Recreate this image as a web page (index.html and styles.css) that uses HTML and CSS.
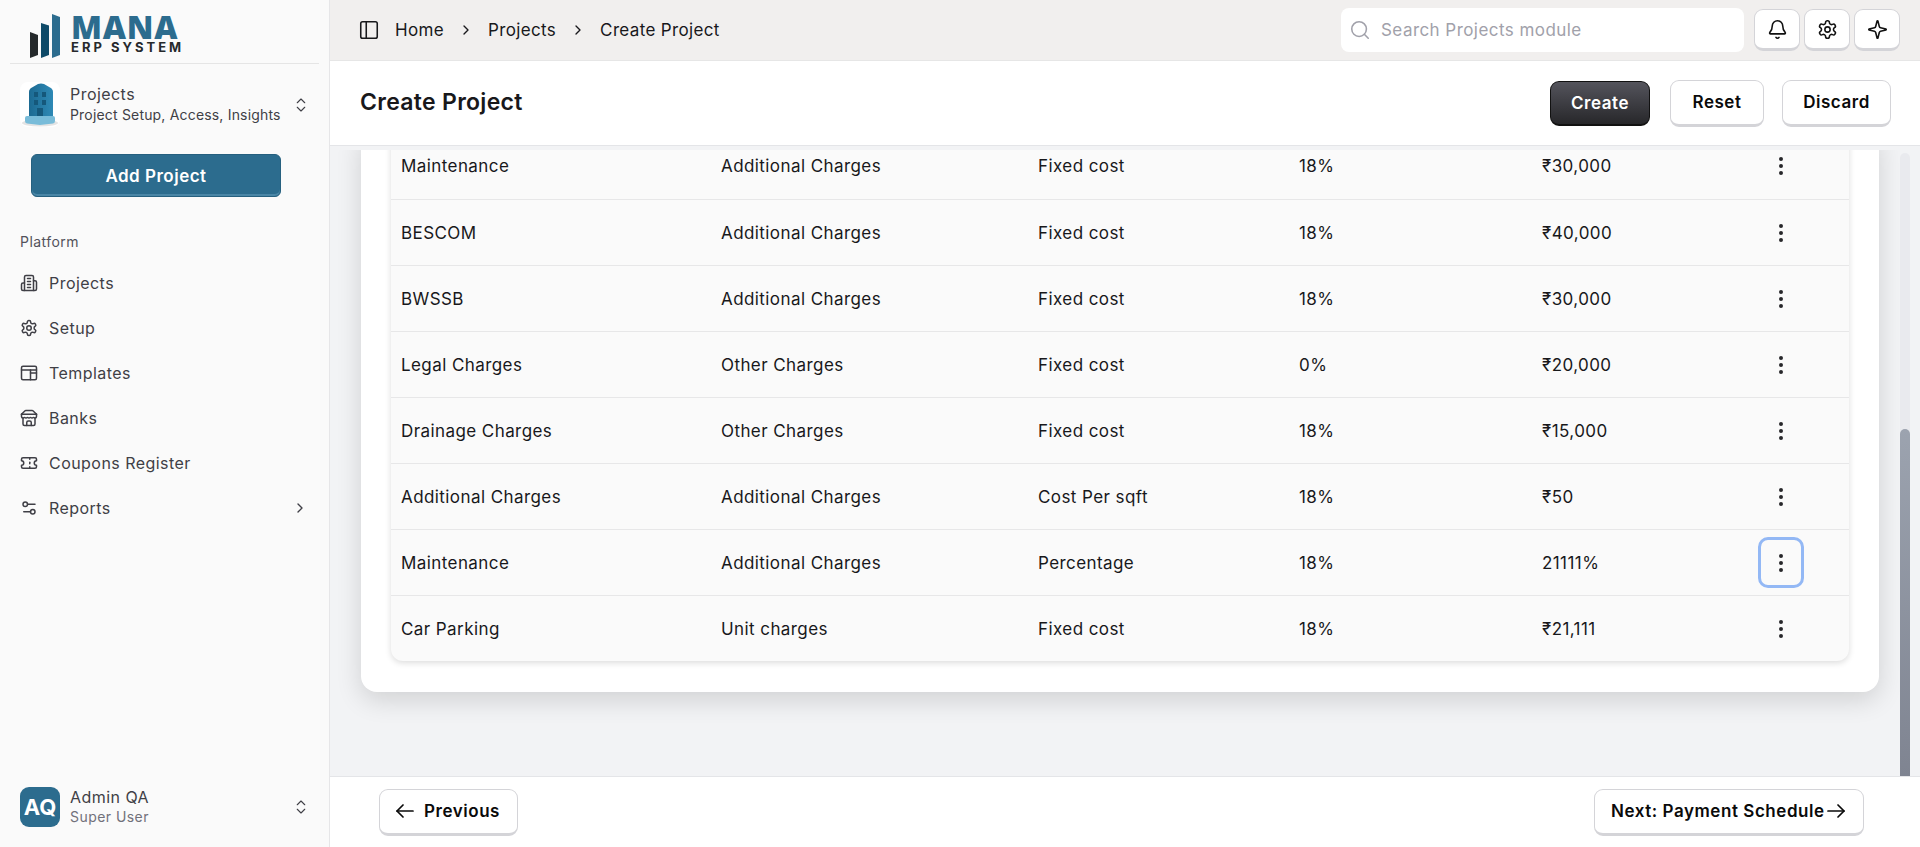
FILE: index.html
```html
<!DOCTYPE html>
<html lang="en">
<head>
    <meta charset="UTF-8">
    <meta name="viewport" content="width=device-width, initial-scale=1.0">
    <title>Create Project</title>
    <link rel="stylesheet" href="styles.css">
</head>
<body>

    <aside class="sidebar">
        <div class="brand">
            <svg class="brand-bars" width="32" height="46" viewBox="0 0 32 46">
                <polygon points="0,18 8,21 8,41 0,44" fill="#25292b"/>
                <polygon points="11,9 19,11.5 19,41 11,44" fill="#0e4a68"/>
                <polygon points="22,0 30,3 30,41 22,44" fill="#2c6c8e"/>
            </svg>
            <div class="brand-text">
                <div class="brand-name">MANA</div>
                <div class="brand-sub">ERP SYSTEM</div>
            </div>
        </div>

        <div class="module">
            <svg class="module-pic" width="40" height="45" viewBox="0 0 40 45">
                <defs>
                    <linearGradient id="towerFill" x1="0" y1="0" x2="1" y2="0">
                        <stop offset="0" stop-color="#1c6a92"/>
                        <stop offset="1" stop-color="#2f8ab6"/>
                    </linearGradient>
                </defs>
                <rect x="0" y="0" width="40" height="45" rx="8" fill="#ffffff"/>
                <ellipse cx="20" cy="41" rx="18" ry="3.500" fill="#e4e4e4"/>
                <path d="M9 35V10q0-3 3-4.500L18 2q3-1 6 0l6 3.500q3 1.500 3 4.500V35Z" fill="url(#towerFill)"/>
                <path d="M5 36q0-2 2-2h26q2 0 2 2v3q0 2-2 2.500L20 43 7 41.500q-2-.5-2-2.500Z" fill="#79bcd9"/>
                <g fill="#15587b">
                    <rect x="14" y="10" width="4" height="5"/>
                    <rect x="22" y="10" width="4" height="5"/>
                    <rect x="14" y="18" width="4" height="5"/>
                    <rect x="22" y="18" width="4" height="5"/>
                    <rect x="17" y="26" width="6" height="8"/>
                </g>
            </svg>
            <div class="module-text">
                <div class="module-title">Projects</div>
                <div class="module-sub">Project Setup, Access, Insights</div>
            </div>
            <svg class="icon-sm chevrons" viewBox="0 0 24 24"><path d="m7 15 5 5 5-5"/><path d="m7 9 5-5 5 5"/></svg>
        </div>

        <button class="add-btn">Add Project</button>

        <div class="nav-label">Platform</div>
        <nav class="nav">
            <a class="nav-item">
                <svg class="icon" viewBox="0 0 24 24"><path d="M6 22V4a2 2 0 0 1 2-2h8a2 2 0 0 1 2 2v18Z"/><path d="M6 12H4a2 2 0 0 0-2 2v6a2 2 0 0 0 2 2h2"/><path d="M18 9h2a2 2 0 0 1 2 2v9a2 2 0 0 1-2 2h-2"/><path d="M10 6h4"/><path d="M10 10h4"/><path d="M10 14h4"/><path d="M10 18h4"/></svg>
                Projects
            </a>
            <a class="nav-item">
                <svg class="icon" viewBox="0 0 24 24"><path d="M12.220 2h-.44a2 2 0 0 0-2 2v.18a2 2 0 0 1-1 1.730l-.43.25a2 2 0 0 1-2 0l-.15-.08a2 2 0 0 0-2.730.73l-.22.38a2 2 0 0 0 .73 2.730l.15.1a2 2 0 0 1 1 1.720v.51a2 2 0 0 1-1 1.740l-.15.09a2 2 0 0 0-.73 2.730l.22.38a2 2 0 0 0 2.730.73l.15-.08a2 2 0 0 1 2 0l.43.25a2 2 0 0 1 1 1.730V20a2 2 0 0 0 2 2h.44a2 2 0 0 0 2-2v-.18a2 2 0 0 1 1-1.730l.43-.25a2 2 0 0 1 2 0l.15.08a2 2 0 0 0 2.730-.73l.22-.39a2 2 0 0 0-.73-2.730l-.15-.08a2 2 0 0 1-1-1.740v-.5a2 2 0 0 1 1-1.740l.15-.09a2 2 0 0 0 .73-2.730l-.22-.38a2 2 0 0 0-2.730-.73l-.15.08a2 2 0 0 1-2 0l-.43-.25a2 2 0 0 1-1-1.730V4a2 2 0 0 0-2-2z"/><circle cx="12" cy="12" r="3"/></svg>
                Setup
            </a>
            <a class="nav-item">
                <svg class="icon" viewBox="0 0 24 24"><rect x="2" y="3" width="20" height="18" rx="2"/><path d="M2 8h20"/><path d="M14 8v13"/><path d="M14 12h8"/></svg>
                Templates
            </a>
            <a class="nav-item">
                <svg class="icon" viewBox="0 0 24 24"><path d="m2 7 4.410-4.410A2 2 0 0 1 7.830 2h8.340a2 2 0 0 1 1.420.59L22 7"/><path d="M4 12v8a2 2 0 0 0 2 2h12a2 2 0 0 0 2-2v-8"/><path d="M15 22v-4a2 2 0 0 0-2-2h-2a2 2 0 0 0-2 2v4"/><path d="M2 7h20"/><path d="M22 7v3a2 2 0 0 1-2 2 2.700 2.700 0 0 1-1.590-.63.7.7 0 0 0-.82 0A2.700 2.700 0 0 1 16 12a2.700 2.700 0 0 1-1.590-.63.7.7 0 0 0-.82 0A2.700 2.700 0 0 1 12 12a2.700 2.700 0 0 1-1.590-.63.7.7 0 0 0-.82 0A2.700 2.700 0 0 1 8 12a2.700 2.700 0 0 1-1.590-.63.7.7 0 0 0-.82 0A2.700 2.700 0 0 1 4 12a2 2 0 0 1-2-2V7"/></svg>
                Banks
            </a>
            <a class="nav-item">
                <svg class="icon" viewBox="0 0 24 24"><path d="M2 9a3 3 0 0 1 0 6v2a2 2 0 0 0 2 2h16a2 2 0 0 0 2-2v-2a3 3 0 0 1 0-6V7a2 2 0 0 0-2-2H4a2 2 0 0 0-2 2Z"/><path d="M13 5v2"/><path d="M13 17v2"/><path d="M13 11v2"/></svg>
                Coupons Register
            </a>
            <a class="nav-item">
                <svg class="icon" viewBox="0 0 24 24"><path d="M20 7h-9"/><path d="M14 17H5"/><circle cx="17" cy="17" r="3"/><circle cx="7" cy="7" r="3"/></svg>
                Reports
                <svg class="icon-sm nav-arrow" viewBox="0 0 24 24"><path d="m9 18 6-6-6-6"/></svg>
            </a>
        </nav>

        <div class="user">
            <div class="avatar">AQ</div>
            <div class="user-text">
                <div class="user-name">Admin QA</div>
                <div class="user-role">Super User</div>
            </div>
            <svg class="icon-sm chevrons" viewBox="0 0 24 24"><path d="m7 15 5 5 5-5"/><path d="m7 9 5-5 5 5"/></svg>
        </div>
    </aside>

    <div class="main">
        <header class="topbar">
            <svg class="icon panel-icon" viewBox="0 0 24 24"><rect x="3" y="3" width="18" height="18" rx="2"/><path d="M9 3v18"/></svg>
            <div class="crumbs">
                <span>Home</span>
                <svg class="icon-sm" viewBox="0 0 24 24"><path d="m9 18 6-6-6-6"/></svg>
                <span>Projects</span>
                <svg class="icon-sm" viewBox="0 0 24 24"><path d="m9 18 6-6-6-6"/></svg>
                <span>Create Project</span>
            </div>
            <div class="search">
                <svg class="icon search-icon" viewBox="0 0 24 24"><circle cx="11" cy="11" r="8"/><path d="m21 21-4.300-4.300"/></svg>
                <span>Search Projects module</span>
            </div>
            <div class="top-actions">
                <button class="icon-btn"><svg class="icon" viewBox="0 0 24 24"><path d="M10.268 21a2 2 0 0 0 3.464 0"/><path d="M3.262 15.326A1 1 0 0 0 4 17h16a1 1 0 0 0 .74-1.673C19.410 13.956 18 12.499 18 8A6 6 0 0 0 6 8c0 4.499-1.411 5.956-2.738 7.326"/></svg></button>
                <button class="icon-btn"><svg class="icon" viewBox="0 0 24 24"><path d="M12.220 2h-.44a2 2 0 0 0-2 2v.18a2 2 0 0 1-1 1.730l-.43.25a2 2 0 0 1-2 0l-.15-.08a2 2 0 0 0-2.730.73l-.22.38a2 2 0 0 0 .73 2.730l.15.1a2 2 0 0 1 1 1.720v.51a2 2 0 0 1-1 1.740l-.15.09a2 2 0 0 0-.73 2.730l.22.38a2 2 0 0 0 2.730.73l.15-.08a2 2 0 0 1 2 0l.43.25a2 2 0 0 1 1 1.730V20a2 2 0 0 0 2 2h.44a2 2 0 0 0 2-2v-.18a2 2 0 0 1 1-1.730l.43-.25a2 2 0 0 1 2 0l.15.08a2 2 0 0 0 2.730-.73l.22-.39a2 2 0 0 0-.73-2.730l-.15-.08a2 2 0 0 1-1-1.740v-.5a2 2 0 0 1 1-1.740l.15-.09a2 2 0 0 0 .73-2.730l-.22-.38a2 2 0 0 0-2.730-.73l-.15.08a2 2 0 0 1-2 0l-.43-.25a2 2 0 0 1-1-1.730V4a2 2 0 0 0-2-2z"/><circle cx="12" cy="12" r="3"/></svg></button>
                <button class="icon-btn"><svg class="icon" viewBox="0 0 24 24"><path d="M9.937 15.500A2 2 0 0 0 8.500 14.063l-6.135-1.582a.5.5 0 0 1 0-.962L8.500 9.936A2 2 0 0 0 9.937 8.500l1.582-6.135a.5.5 0 0 1 .963 0L14.063 8.500A2 2 0 0 0 15.500 9.937l6.135 1.581a.5.5 0 0 1 0 .964L15.500 14.063a2 2 0 0 0-1.437 1.437l-1.582 6.135a.5.5 0 0 1-.963 0z"/></svg></button>
            </div>
        </header>

        <div class="page-head">
            <h1>Create Project</h1>
            <div class="page-actions">
                <button class="btn btn-dark">Create</button>
                <button class="btn btn-reset">Reset</button>
                <button class="btn btn-discard">Discard</button>
            </div>
        </div>

        <div class="content">
            <div class="scroll-pane">
                <div class="card">
                    <div class="table-wrap">
                        <table>
                            <colgroup>
                                <col class="col-name">
                                <col class="col-type">
                                <col class="col-basis">
                                <col class="col-tax">
                                <col class="col-amount">
                                <col>
                            </colgroup>
                            <tbody>
                                <tr><td>Maintenance</td><td>Additional Charges</td><td>Fixed cost</td><td>18%</td><td>₹30,000</td><td><button class="row-btn"><svg class="icon-dots" viewBox="0 0 24 24"><circle cx="12" cy="12" r="1"/><circle cx="12" cy="5" r="1"/><circle cx="12" cy="19" r="1"/></svg></button></td></tr>
                                <tr><td>BESCOM</td><td>Additional Charges</td><td>Fixed cost</td><td>18%</td><td>₹40,000</td><td><button class="row-btn"><svg class="icon-dots" viewBox="0 0 24 24"><circle cx="12" cy="12" r="1"/><circle cx="12" cy="5" r="1"/><circle cx="12" cy="19" r="1"/></svg></button></td></tr>
                                <tr><td>BWSSB</td><td>Additional Charges</td><td>Fixed cost</td><td>18%</td><td>₹30,000</td><td><button class="row-btn"><svg class="icon-dots" viewBox="0 0 24 24"><circle cx="12" cy="12" r="1"/><circle cx="12" cy="5" r="1"/><circle cx="12" cy="19" r="1"/></svg></button></td></tr>
                                <tr><td>Legal Charges</td><td>Other Charges</td><td>Fixed cost</td><td>0%</td><td>₹20,000</td><td><button class="row-btn"><svg class="icon-dots" viewBox="0 0 24 24"><circle cx="12" cy="12" r="1"/><circle cx="12" cy="5" r="1"/><circle cx="12" cy="19" r="1"/></svg></button></td></tr>
                                <tr><td>Drainage Charges</td><td>Other Charges</td><td>Fixed cost</td><td>18%</td><td>₹15,000</td><td><button class="row-btn"><svg class="icon-dots" viewBox="0 0 24 24"><circle cx="12" cy="12" r="1"/><circle cx="12" cy="5" r="1"/><circle cx="12" cy="19" r="1"/></svg></button></td></tr>
                                <tr><td>Additional Charges</td><td>Additional Charges</td><td>Cost Per sqft</td><td>18%</td><td>₹50</td><td><button class="row-btn"><svg class="icon-dots" viewBox="0 0 24 24"><circle cx="12" cy="12" r="1"/><circle cx="12" cy="5" r="1"/><circle cx="12" cy="19" r="1"/></svg></button></td></tr>
                                <tr><td>Maintenance</td><td>Additional Charges</td><td>Percentage</td><td>18%</td><td>21111%</td><td><button class="row-btn row-btn-focus"><svg class="icon-dots" viewBox="0 0 24 24"><circle cx="12" cy="12" r="1"/><circle cx="12" cy="5" r="1"/><circle cx="12" cy="19" r="1"/></svg></button></td></tr>
                                <tr><td>Car Parking</td><td>Unit charges</td><td>Fixed cost</td><td>18%</td><td>₹21,111</td><td><button class="row-btn"><svg class="icon-dots" viewBox="0 0 24 24"><circle cx="12" cy="12" r="1"/><circle cx="12" cy="5" r="1"/><circle cx="12" cy="19" r="1"/></svg></button></td></tr>
                            </tbody>
                        </table>
                    </div>
                </div>
            </div>
            <div class="scroll-track"><div class="scroll-thumb"></div></div>
        </div>

        <footer class="page-foot">
            <button class="btn btn-prev"><svg class="arrow" width="18" height="14" viewBox="0 0 18 14"><path d="M1 7h16"/><path d="M7 1 1 7l6 6"/></svg>Previous</button>
            <button class="btn btn-next">Next: Payment Schedule<svg class="arrow" width="18" height="14" viewBox="0 0 18 14"><path d="M1 7h16"/><path d="m11 1 6 6-6 6"/></svg></button>
        </footer>
    </div>

</body>
</html>
```

FILE: styles.css
```css
* {
    box-sizing: border-box;
}

html, body {
    height: 100%;
}

body {
    font-family: Inter, 'Noto Sans', sans-serif;
    font-size: 16px;
    letter-spacing: 0.45px;
    margin: 0;
    display: flex;
    height: 847px;
    overflow: hidden;
    background-color: #f2f3f5;
    color: #18181b;
}

button {
    font-family: inherit;
    letter-spacing: inherit;
    cursor: pointer;
}

svg {
    flex-shrink: 0;
    display: block;
}

.icon, .icon-sm, .icon-dots, .arrow {
    fill: none;
    stroke: currentColor;
    stroke-width: 2;
    stroke-linecap: round;
    stroke-linejoin: round;
}

.icon {
    width: 18px;
    height: 18px;
}

.icon-sm {
    width: 16px;
    height: 16px;
}

.icon-dots {
    width: 24px;
    height: 24px;
}

.arrow {
    stroke-width: 1.700;
}

/* sidebar */
.sidebar {
    width: 330px;
    flex-shrink: 0;
    display: flex;
    flex-direction: column;
    background-color: #fafafa;
    border-right: 1px solid #e6e6e8;
    color: #3f3f46;
}

.brand {
    height: 64px;
    margin: 0 10px;
    padding: 14px 0 0 20px;
    display: flex;
    gap: 9px;
    border-bottom: 1px solid #e5e5e5;
}

.brand-name {
    font-family: 'Open Sans', sans-serif;
    font-size: 32px;
    font-weight: 800;
    line-height: 25px;
    letter-spacing: 0.8px;
    color: #2c6c8e;
}

.brand-sub {
    font-size: 13px;
    font-weight: 700;
    line-height: 16px;
    letter-spacing: 3px;
    color: #26292c;
}

.module {
    height: 45px;
    margin: 18px 20px 0;
    display: flex;
    align-items: center;
    gap: 10px;
}

.module-text {
    flex: 1;
    margin-top: -1px;
    line-height: 20px;
}

.module-title {
    margin-bottom: 1px;
    font-size: 16px;
}

.module-sub {
    font-size: 14px;
    letter-spacing: 0.18px;
    white-space: nowrap;
}

.chevrons {
    width: 18px;
    height: 18px;
    margin-right: -1px;
    stroke-width: 1.500;
}

.add-btn {
    width: 250px;
    height: 43px;
    margin: 27px 0 0 31px;
    font-size: 17px;
    font-weight: 600;
    letter-spacing: 0.5px;
    color: #fff;
    background-color: #2c6c8e;
    border: 1px solid #26607f;
    border-radius: 6px;
    box-shadow: inset 0 -2px 0 #4a86a6;
}

.nav-label {
    margin: 35px 0 0 20px;
    font-size: 14px;
    line-height: 20px;
    color: #52525b;
}

.nav {
    margin-top: 8px;
}

.nav-item {
    height: 45px;
    padding: 0 20px;
    display: flex;
    align-items: center;
    gap: 11px;
}

.nav-arrow {
    margin-left: auto;
    margin-right: 1px;
}

.user {
    margin: auto 20px 20px;
    height: 40px;
    display: flex;
    align-items: center;
    gap: 10px;
}

.avatar {
    width: 40px;
    height: 40px;
    border-radius: 9px;
    background-color: #2c6c8e;
    color: #fff;
    font-size: 22px;
    font-weight: 700;
    letter-spacing: 0;
    display: flex;
    align-items: center;
    justify-content: center;
}

.user-text {
    flex: 1;
    line-height: 20px;
}

.user-name {
    color: #3f3f46;
}

.user-role {
    font-size: 14px;
    color: #71717a;
}

/* main column */
.main {
    flex: 1;
    min-width: 0;
    display: flex;
    flex-direction: column;
}

.topbar {
    height: 61px;
    flex-shrink: 0;
    padding: 0 20px 0 28px;
    display: flex;
    align-items: center;
    background-color: #f1efee;
    border-bottom: 1px solid #e6e6e6;
}

.panel-icon {
    width: 22px;
    height: 22px;
    stroke-width: 1.700;
}

.crumbs {
    margin-left: 15px;
    display: flex;
    align-items: center;
    gap: 14px;
    font-size: 17px;
    letter-spacing: 0.35px;
    color: #18181b;
}

.search {
    width: 403px;
    height: 44px;
    margin-left: auto;
    padding: 0 8px;
    display: flex;
    align-items: center;
    gap: 10px;
    font-size: 17px;
    background-color: #fff;
    border-radius: 8px;
    color: #a1a1aa;
}

.search-icon {
    width: 22px;
    height: 22px;
    stroke-width: 1.700;
}

.top-actions {
    margin-left: 10px;
    display: flex;
    gap: 4px;
}

.icon-btn {
    width: 46px;
    height: 42px;
    padding: 0;
    display: flex;
    align-items: center;
    justify-content: center;
    background-color: #fff;
    border: 1px solid #d4d4d8;
    border-bottom: 3px solid #d4d4d8;
    border-radius: 9px;
    color: #111;
}

.icon-btn .icon {
    width: 21px;
    height: 21px;
    stroke-width: 1.800;
}

.page-head {
    height: 85px;
    flex-shrink: 0;
    padding: 0 29px 0 30px;
    display: flex;
    align-items: center;
    justify-content: space-between;
    background-color: #fff;
    border-bottom: 1px solid #e4e5e8;
}

h1 {
    margin: 0 0 2px;
    font-size: 23px;
    font-weight: 600;
    letter-spacing: 0.3px;
}

.page-actions {
    display: flex;
    align-items: center;
    gap: 18px;
}

.btn {
    height: 47px;
    padding: 0 19px;
    display: flex;
    align-items: center;
    font-size: 17px;
    font-weight: 600;
    letter-spacing: 0.55px;
    color: #0a0a0a;
    background-color: #fff;
    border: 1px solid #d4d4d8;
    border-bottom: 3px solid #d4d4d8;
    border-radius: 9px;
}

.btn-dark {
    width: 100px;
    height: 45px;
    margin-right: 2px;
    justify-content: center;
    color: #fff;
    background: linear-gradient(#54545c, #27272a);
    border: 1px solid #111;
    border-bottom-width: 2px;
}

.btn-reset {
    width: 94px;
    justify-content: center;
}

.btn-discard {
    width: 109px;
    justify-content: center;
}

/* scrolled table area */
.content {
    flex: 1;
    min-height: 0;
    display: flex;
}

.scroll-pane {
    width: 1570px;
    margin-top: 4px;
    padding-bottom: 84px;
    display: flex;
    flex-direction: column;
    justify-content: flex-end;
    overflow: hidden;
}

.card {
    flex-shrink: 0;
    margin: 0 21px 0 31px;
    padding: 0 30px 31px;
    background-color: #fff;
    border-radius: 0 0 16px 16px;
    box-shadow: 0 8px 26px rgba(0, 0, 0, 0.14);
}

.table-wrap {
    background-color: #fafafa;
    border-radius: 0 0 12px 12px;
    box-shadow: 0 2px 6px rgba(0, 0, 0, 0.14);
}

table {
    width: 100%;
    border-collapse: collapse;
    table-layout: fixed;
    font-size: 17px;
    letter-spacing: 0.42px;
}

.col-name {
    width: 320px;
}

.col-type {
    width: 317px;
}

.col-basis {
    width: 261px;
}

.col-tax {
    width: 243px;
}

.col-amount {
    width: 216px;
}

td {
    height: 66px;
    padding: 1px 0 0 10px;
    border-bottom: 1px solid #e7e7e8;
}

tr:last-child td {
    border-bottom: none;
}

.row-btn {
    width: 46px;
    height: 46px;
    padding: 0;
    display: flex;
    align-items: center;
    justify-content: center;
    background: none;
    border: 3px solid transparent;
    border-radius: 10px;
    color: #27272a;
}

.row-btn-focus {
    height: 51px;
    border-color: #93b8f5;
}

.scroll-track {
    width: 10px;
    margin-top: 7px;
    display: flex;
    flex-direction: column;
    justify-content: flex-end;
    background-color: #e9eaee;
    border-radius: 5px 5px 0 0;
}

.scroll-thumb {
    height: 347px;
    background: linear-gradient(#9ca3af, #7f8491);
    border-radius: 5px 5px 0 0;
}

.page-foot {
    height: 71px;
    flex-shrink: 0;
    padding: 0 56px 0 49px;
    display: flex;
    align-items: center;
    justify-content: space-between;
    background-color: #fff;
    border-top: 1px solid #e4e5e8;
}

.btn-prev {
    gap: 10px;
    padding: 0 16px;
    width: 139px;
}

.btn-next {
    gap: 2px;
    padding: 0 16px;
    width: 270px;
}
```
